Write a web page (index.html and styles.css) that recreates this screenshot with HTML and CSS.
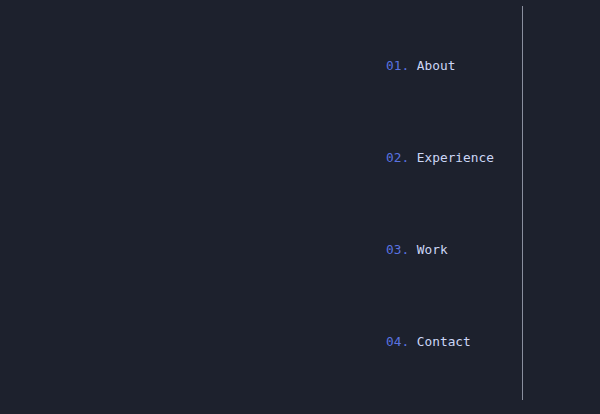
FILE: index.html
```html
<!DOCTYPE html>
<html>
<head>
<meta charset="utf-8">
<link rel="stylesheet" href="styles.css">
</head>
<body>
<div class="page">
  <nav class="nav">
    <ol class="nav-list">
      <li class="nav-item"><span class="num">01.</span> <span class="label">About</span></li>
      <li class="nav-item"><span class="num">02.</span> <span class="label">Experience</span></li>
      <li class="nav-item"><span class="num">03.</span> <span class="label">Work</span></li>
      <li class="nav-item"><span class="num">04.</span> <span class="label">Contact</span></li>
    </ol>
  </nav>
</div>
</body>
</html>
```
FILE: styles.css
```css
html, body {
  margin: 0;
  padding: 0;
  background: #1d212d;
}
.page {
  width: 600px;
  height: 414px;
  display: flex;
  justify-content: flex-end;
  align-items: flex-start;
  box-sizing: border-box;
  padding: 6px 77px 0 0;
}
.nav {
  width: 136px;
  height: 394px;
  border-right: 1px solid #8a8f9e;
}
.nav-list {
  list-style: none;
  margin: 0;
  padding: 51px 0 0 0;
  display: flex;
  flex-direction: column;
  gap: 74px;
}
.nav-item {
  font-family: "DejaVu Sans Mono", monospace;
  font-size: 12.8px;
  line-height: 18px;
  height: 18px;
  white-space: pre;
  color: #ccd6f6;
}
.num {
  color: #5a73e0;
}
.label {
  color: #ccd6f6;
}
```
